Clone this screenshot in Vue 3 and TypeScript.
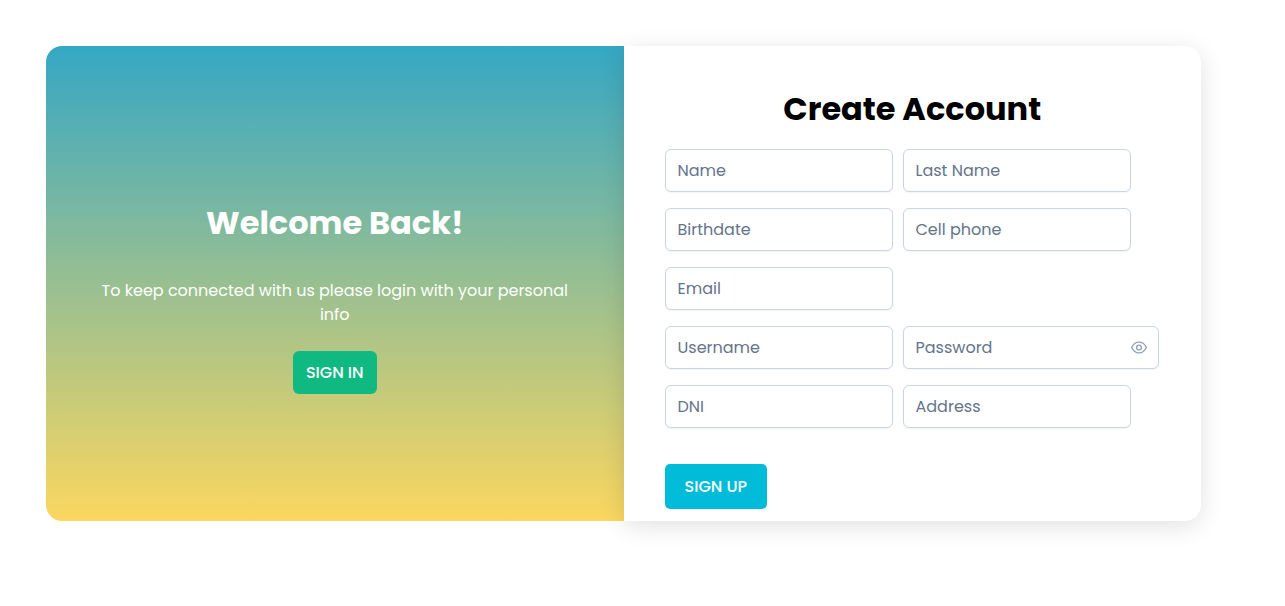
<script setup lang="ts">
import { reactive, ref } from 'vue'

interface Field {
  id: string
  label: string
  type: string
}

const rows: Field[][] = [
  [
    { id: 'name', label: 'Name', type: 'text' },
    { id: 'lastName', label: 'Last Name', type: 'text' },
  ],
  [
    { id: 'birthdate', label: 'Birthdate', type: 'text' },
    { id: 'cellPhone', label: 'Cell phone', type: 'tel' },
  ],
  [{ id: 'email', label: 'Email', type: 'email' }],
  [
    { id: 'username', label: 'Username', type: 'text' },
    { id: 'password', label: 'Password', type: 'password' },
  ],
  [
    { id: 'dni', label: 'DNI', type: 'text' },
    { id: 'address', label: 'Address', type: 'text' },
  ],
]

const values = reactive<Record<string, string>>({})
const showPassword = ref(false)

function inputType(field: Field): string {
  return field.type === 'password' && showPassword.value ? 'text' : field.type
}
</script>

<template>
  <main class="page">
    <section class="welcome">
      <h2 class="title">Welcome Back!</h2>
      <p class="message">To keep connected with us please login with your personal info</p>
      <button type="button" class="button sign-in">SIGN IN</button>
    </section>

    <section class="account">
      <h2 class="title">Create Account</h2>
      <form class="form" @submit.prevent>
        <div v-for="(row, index) in rows" :key="index" class="row">
          <div
            v-for="field in row"
            :key="field.id"
            class="field"
            :class="{ secret: field.type === 'password' }"
          >
            <input
              :id="field.id"
              v-model="values[field.id]"
              class="input"
              :type="inputType(field)"
              :placeholder="field.label"
              :aria-label="field.label"
            />
            <button
              v-if="field.type === 'password'"
              type="button"
              class="toggle"
              aria-label="Show password"
              :aria-pressed="showPassword"
              @click="showPassword = !showPassword"
            >
              <svg width="16" height="16" viewBox="0 0 16 16" fill="none" stroke="currentColor" aria-hidden="true">
                <path
                  d="M0.7 7.5C2.2 4.1 4.9 2.1 8 2.1S13.8 4.1 15.3 7.5C13.8 10.9 11.1 12.9 8 12.9S2.2 10.9 0.7 7.5Z"
                  stroke-width="1.4"
                  stroke-linejoin="round"
                />
                <circle cx="8" cy="7.5" r="2.4" stroke-width="1.4" />
              </svg>
            </button>
          </div>
        </div>
        <button type="submit" class="button sign-up">SIGN UP</button>
      </form>
    </section>
  </main>
</template>

<style>
body {
  background: #fff;
}
</style>

<style scoped>
.page {
  display: grid;
  grid-template-columns: minmax(0, 1fr) minmax(0, 1fr);
  margin: 46px 84px 46px 46px;
  font-family: Poppins, Inter, "Liberation Sans", sans-serif;
  font-size: 16px;
  line-height: 24px;
}

.page *,
.page {
  box-sizing: border-box;
}

.welcome {
  display: flex;
  flex-direction: column;
  align-items: center;
  justify-content: center;
  padding: 30px 50px 0;
  border-radius: 16px 0 0 16px;
  background: linear-gradient(#35a7c4, #fbd75f);
  color: #fff;
  text-align: center;
}

.account {
  position: relative;
  padding: 43px 20px 12px;
  border-radius: 0 16px 16px 0;
  background: #fff;
  box-shadow: 0 5px 25px rgba(0, 0, 0, 0.12);
}

.title {
  margin: 0;
  font-size: 32px;
  font-weight: 700;
  line-height: 40px;
  text-align: center;
}

.account .title {
  margin-bottom: 20px;
  color: #000;
}

.message {
  margin: 36px 0 24px;
}

.form {
  display: flex;
  flex-direction: column;
  align-items: flex-start;
  gap: 16px;
  padding-left: 21px;
}

.row {
  display: flex;
  flex-wrap: wrap;
  gap: 10px;
}

.field {
  position: relative;
  width: 228px;
}

.field.secret {
  width: 256px;
}

.input {
  display: block;
  width: 100%;
  height: 43px;
  padding: 0 12px;
  border: 1px solid #cbd5e1;
  border-radius: 6px;
  background: #fff;
  box-shadow: 0 1px 2px rgba(18, 18, 23, 0.05);
  color: #334155;
  font: inherit;
}

.secret .input {
  padding-right: 40px;
}

.input::placeholder {
  color: #64748b;
  opacity: 1;
}

.input:focus {
  border-color: #10b981;
  outline: none;
}

.toggle {
  position: absolute;
  top: 0;
  right: 12px;
  bottom: 0;
  display: flex;
  align-items: center;
  padding: 0;
  border: 0;
  background: none;
  color: #94a3b8;
  cursor: pointer;
}

.button {
  border: 0;
  color: #fff;
  font: inherit;
  font-weight: 500;
  white-space: nowrap;
  cursor: pointer;
}

.sign-in {
  height: 43px;
  padding: 0 13px;
  border-radius: 6px;
  background: #10b981;
}

.sign-up {
  height: 45px;
  margin-top: 20px;
  padding: 0 20px;
  border-radius: 5px;
  background: #00bcd9;
}
</style>
